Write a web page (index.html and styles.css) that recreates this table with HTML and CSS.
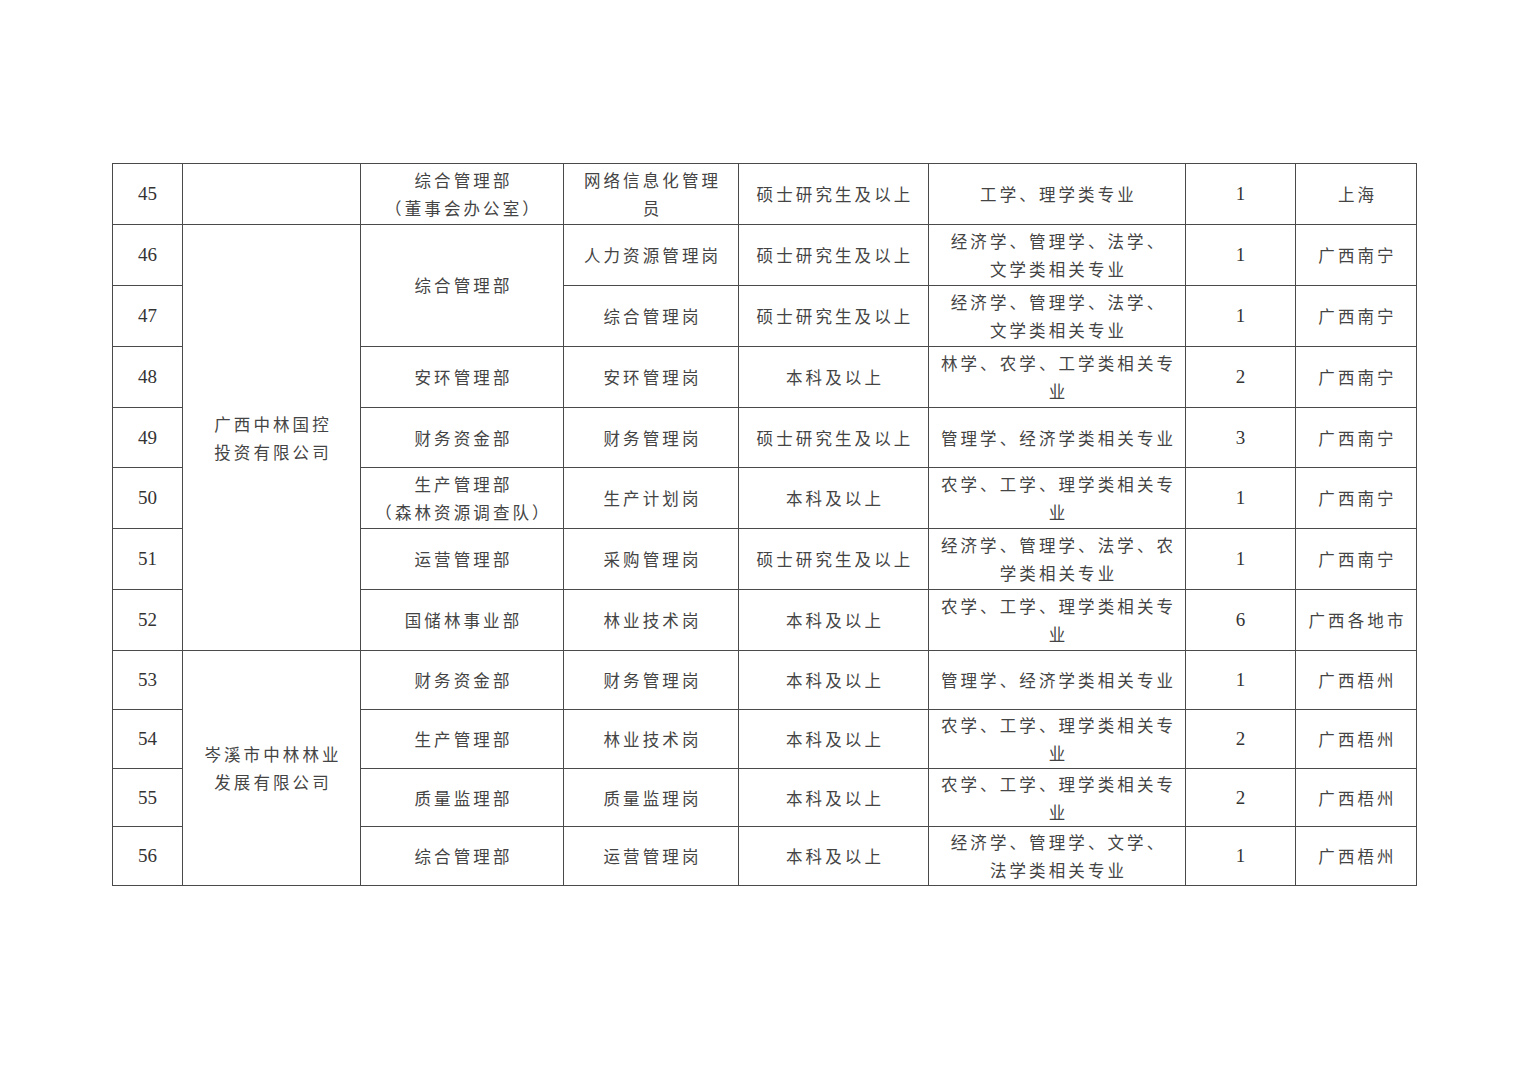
FILE: index.html
```html
<!DOCTYPE html>
<html lang="zh-CN">
<head>
<meta charset="utf-8">
<link rel="stylesheet" href="styles.css">
</head>
<body>
<div class="page">
<table class="jobs">
<colgroup>
<col class="c-no"><col class="c-co"><col class="c-dept"><col class="c-post"><col class="c-edu"><col class="c-major"><col class="c-num"><col class="c-loc">
</colgroup>
<tbody>
<tr class="r">
<td class="num">45</td><td></td><td>综合管理部<br>（董事会办公室）</td><td>网络信息化管理<br>员</td><td>硕士研究生及以上</td><td>工学、理学类专业</td><td class="num">1</td><td>上海</td>
</tr>
<tr class="r">
<td class="num">46</td><td rowspan="7">广西中林国控<br>投资有限公司</td><td rowspan="2">综合管理部</td><td>人力资源管理岗</td><td>硕士研究生及以上</td><td>经济学、管理学、法学、<br>文学类相关专业</td><td class="num">1</td><td>广西南宁</td>
</tr>
<tr class="r">
<td class="num">47</td><td>综合管理岗</td><td>硕士研究生及以上</td><td>经济学、管理学、法学、<br>文学类相关专业</td><td class="num">1</td><td>广西南宁</td>
</tr>
<tr class="r">
<td class="num">48</td><td>安环管理部</td><td>安环管理岗</td><td>本科及以上</td><td>林学、农学、工学类相关专<br>业</td><td class="num">2</td><td>广西南宁</td>
</tr>
<tr class="r">
<td class="num">49</td><td>财务资金部</td><td>财务管理岗</td><td>硕士研究生及以上</td><td>管理学、经济学类相关专业</td><td class="num">3</td><td>广西南宁</td>
</tr>
<tr class="r">
<td class="num">50</td><td>生产管理部<br>（森林资源调查队）</td><td>生产计划岗</td><td>本科及以上</td><td>农学、工学、理学类相关专<br>业</td><td class="num">1</td><td>广西南宁</td>
</tr>
<tr class="r">
<td class="num">51</td><td>运营管理部</td><td>采购管理岗</td><td>硕士研究生及以上</td><td>经济学、管理学、法学、农<br>学类相关专业</td><td class="num">1</td><td>广西南宁</td>
</tr>
<tr class="r">
<td class="num">52</td><td>国储林事业部</td><td>林业技术岗</td><td>本科及以上</td><td>农学、工学、理学类相关专<br>业</td><td class="num">6</td><td>广西各地市</td>
</tr>
<tr class="s">
<td class="num">53</td><td rowspan="4">岑溪市中林林业<br>发展有限公司</td><td>财务资金部</td><td>财务管理岗</td><td>本科及以上</td><td>管理学、经济学类相关专业</td><td class="num">1</td><td>广西梧州</td>
</tr>
<tr class="s">
<td class="num">54</td><td>生产管理部</td><td>林业技术岗</td><td>本科及以上</td><td>农学、工学、理学类相关专<br>业</td><td class="num">2</td><td>广西梧州</td>
</tr>
<tr class="s">
<td class="num">55</td><td>质量监理部</td><td>质量监理岗</td><td>本科及以上</td><td>农学、工学、理学类相关专<br>业</td><td class="num">2</td><td>广西梧州</td>
</tr>
<tr class="s">
<td class="num">56</td><td>综合管理部</td><td>运营管理岗</td><td>本科及以上</td><td>经济学、管理学、文学、<br>法学类相关专业</td><td class="num">1</td><td>广西梧州</td>
</tr>
</tbody>
</table>
</div>
</body>
</html>
```
FILE: styles.css
```css
html, body {
  margin: 0;
  padding: 0;
  background: #ffffff;
}
.page {
  padding: 163px 0 0 112px;
}
.jobs {
  border-collapse: collapse;
  table-layout: fixed;
  width: 1304px;
  font-family: "Noto Sans CJK SC", "Noto Sans", sans-serif;
  font-weight: 400;
  font-size: 16.5px;
  color: #444444;
}
.c-no { width: 70px; }
.c-co { width: 178px; }
.c-dept { width: 203px; }
.c-post { width: 175px; }
.c-edu { width: 190px; }
.c-major { width: 257px; }
.c-num { width: 110px; }
.c-loc { width: 121px; }
.jobs td {
  border: 1.4px solid #4a4a4a;
  padding: 0 2px 0 5px;
  text-align: center;
  vertical-align: middle;
  line-height: 28px;
  letter-spacing: 3.1px;
  white-space: nowrap;
}
.jobs tr.r td { height: 59.9px; }
.jobs tr.s td { height: 57.75px; }
.jobs td.num {
  font-family: "Liberation Serif", "Times New Roman", serif;
  font-weight: 400;
  font-size: 19px;
  letter-spacing: 0;
  padding: 0;
  color: #333;
}
```
